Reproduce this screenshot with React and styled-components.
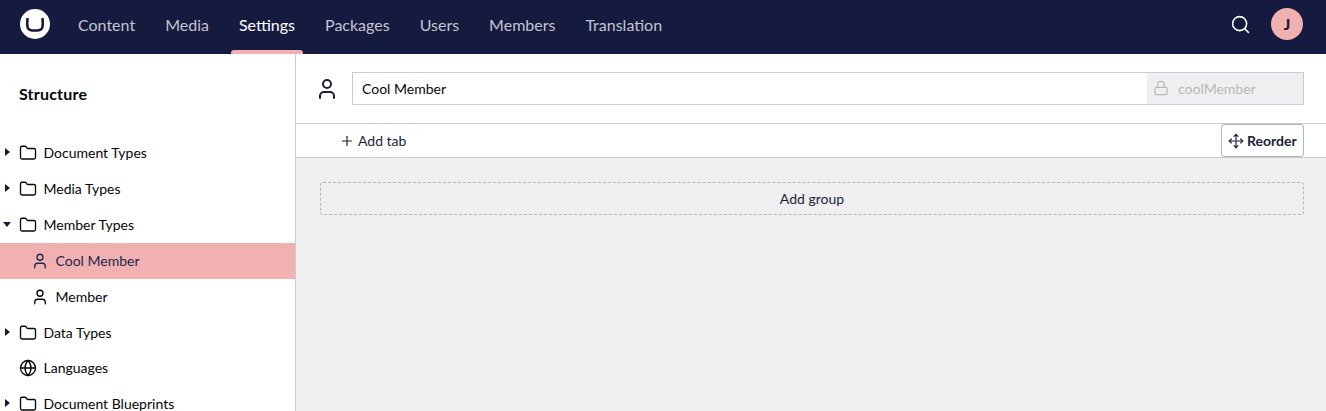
import React from 'react';
import styled, { createGlobalStyle, css } from 'styled-components';
import { Folder, Globe, Lock, Move, Plus, Search, User } from 'lucide-react';

const GlobalStyle = createGlobalStyle`
  *, *::before, *::after { box-sizing: border-box; }
  body {
    margin: 0;
    overflow: hidden;
    background: #fff;
    color: #060606;
    font: 14px/20px Lato, "Open Sans", sans-serif;
  }
  button { font: inherit; cursor: pointer; }
`;

const Shell = styled.div`
  display: flex;
  flex-direction: column;
  height: 100vh;
`;

const Header = styled.header`
  display: flex;
  flex: none;
  height: 54px;
  padding: 0 23px 0 20px;
  background: #151a3f;
  border-bottom: 1px solid #11173a;
`;

const Logo = styled.svg`
  width: 30px;
  height: 30px;
  margin: 9px 13px 0 0;
`;

const Nav = styled.nav`
  display: flex;
  flex: 1;
`;

const NavItem = styled.a`
  position: relative;
  padding: 14px 15px 0;
  font-size: 16px;
  line-height: 21px;
  color: ${(p) => (p.$active ? '#fff' : '#c4c5d0')};

  ${(p) =>
    p.$active &&
    css`
      &::after {
        content: '';
        position: absolute;
        left: 7px;
        right: 7px;
        bottom: -1px;
        height: 4px;
        border-radius: 3px 3px 0 0;
        background: #f2b1b1;
      }
    `}
`;

const Tools = styled.div`
  display: flex;
  align-items: center;
  height: 48px;
  gap: 20px;
  color: #fff;
`;

const Avatar = styled.div`
  width: 32px;
  height: 32px;
  border-radius: 50%;
  background: #f2b1b1;
  color: #151a3f;
  font-size: 15px;
  font-weight: 900;
  line-height: 32px;
  text-align: center;
`;

const Body = styled.div`
  display: flex;
  flex: 1;
  min-height: 0;
`;

const Sidebar = styled.aside`
  flex: none;
  width: 296px;
  border-right: 1px solid #cbcbce;
  overflow: hidden;
`;

const SidebarTitle = styled.h3`
  margin: 0;
  padding: 30px 19px 31px;
  font-size: 16px;
  font-weight: 700;
  line-height: 20px;
  letter-spacing: 0.2px;
`;

const TreeRow = styled.div`
  display: flex;
  align-items: center;
  height: ${(p) => (p.$short ? 35 : 36)}px;
  padding-bottom: ${(p) => (p.$short ? 1 : 0)}px;
  padding-left: ${(p) => (p.$child ? 31 : 0)}px;
  background: ${(p) => (p.$selected ? '#f2b1b1' : 'transparent')};
  color: ${(p) => (p.$selected ? '#1b264f' : '#060606')};

  > svg { flex: none; }
`;

const TreeLabel = styled.span`
  margin-left: 6.5px;
`;

const CaretSlot = styled.span`
  width: 19px;
  height: 16px;
  flex: none;
`;

const Caret = styled.i`
  display: block;
  width: 0;
  height: 0;
  border-style: solid;
  ${(p) =>
    p.$open
      ? css`
          margin: 5px 0 0 3px;
          border-width: 5px 4px 0;
          border-color: #151a3f transparent transparent;
        `
      : css`
          margin: 3px 0 0 5px;
          border-width: 4px 0 4px 5px;
          border-color: transparent transparent transparent #151a3f;
        `}
`;

const Editor = styled.main`
  display: flex;
  flex: 1;
  flex-direction: column;
  min-width: 0;
`;

const EditorHeader = styled.div`
  display: flex;
  align-items: center;
  height: 70px;
  padding: 0 22px 0 19px;
  border-bottom: 1px solid #cbcbce;
  color: #1b1f3a;

  > svg { margin-right: 13px; }
`;

const NameField = styled.div`
  display: flex;
  flex: 1;
  height: 33px;
  border: 1px solid #cbcbce;
  line-height: 32px;
  color: #060606;
`;

const NameValue = styled.span`
  flex: 1;
  padding-left: 9px;
`;

const Alias = styled.span`
  display: flex;
  align-items: center;
  gap: 9px;
  width: 156px;
  padding-left: 6px;
  background: #efeff1;
  color: #b8b8b8;

  svg { margin-bottom: 2px; }
`;

const TabBar = styled.div`
  display: flex;
  justify-content: space-between;
  height: 34px;
  padding: 0 22px 0 43px;
  border-bottom: 1px solid #cbcbce;
`;

const AddTab = styled.button`
  display: flex;
  align-items: center;
  gap: 3px;
  padding: 0;
  border: 0;
  background: none;
  color: #1b1f3a;
`;

const ReorderButton = styled.button`
  display: flex;
  align-items: center;
  gap: 3px;
  width: 83px;
  height: 33px;
  padding: 0 0 0 6px;
  border: 1px solid #b5b5b8;
  border-radius: 3px;
  background: #fff;
  color: #1b1f3a;
  font-weight: 700;
`;

const Canvas = styled.section`
  flex: 1;
  padding: 24px 22px 24px 24px;
  background: #efeff1;
`;

const AddGroup = styled.button`
  display: block;
  width: 100%;
  height: 33px;
  padding: 0;
  border: 1px dashed #b5b5b8;
  border-radius: 3px;
  background: none;
  color: #1b1f3a;
`;

const sections = ['Content', 'Media', 'Settings', 'Packages', 'Users', 'Members', 'Translation'];

const tree = [
  { label: 'Document Types', icon: Folder, caret: true },
  { label: 'Media Types', icon: Folder, caret: true },
  { label: 'Member Types', icon: Folder, caret: true, open: true },
  { label: 'Cool Member', icon: User, child: true, selected: true },
  { label: 'Member', icon: User, child: true },
  { label: 'Data Types', icon: Folder, caret: true },
  { label: 'Languages', icon: Globe, short: true },
  { label: 'Document Blueprints', icon: Folder, caret: true },
];

function TreeItem({ item }) {
  const Icon = item.icon;
  return (
    <TreeRow $child={item.child} $selected={item.selected} $short={item.short}>
      {!item.child && <CaretSlot>{item.caret && <Caret $open={item.open} />}</CaretSlot>}
      <Icon size={18} strokeWidth={1.75} />
      <TreeLabel>{item.label}</TreeLabel>
    </TreeRow>
  );
}

export default function App() {
  return (
    <Shell>
      <GlobalStyle />
      <Header>
        <Logo viewBox="0 0 30 30">
          <circle cx="15" cy="15" r="15" fill="#fff" />
          <path
            d="M7.6 9C7 13 7 16.300 7.700 18.600C8.400 21 10.500 21.600 15 21.600S21.600 21 22.300 18.600C23 16.300 23 13 22.400 9"
            fill="none"
            stroke="#151a3f"
            strokeWidth="2.5"
          />
        </Logo>
        <Nav>
          {sections.map((name) => (
            <NavItem key={name} $active={name === 'Settings'}>{name}</NavItem>
          ))}
        </Nav>
        <Tools>
          <Search size={21} strokeWidth={1.75} />
          <Avatar>J</Avatar>
        </Tools>
      </Header>
      <Body>
        <Sidebar>
          <SidebarTitle>Structure</SidebarTitle>
          {tree.map((item) => (
            <TreeItem key={item.label} item={item} />
          ))}
        </Sidebar>
        <Editor>
          <EditorHeader>
            <User size={24} strokeWidth={2} />
            <NameField>
              <NameValue>Cool Member</NameValue>
              <Alias>
                <Lock size={16} strokeWidth={1.75} />
                coolMember
              </Alias>
            </NameField>
          </EditorHeader>
          <TabBar>
            <AddTab>
              <Plus size={16} strokeWidth={1.75} />
              Add tab
            </AddTab>
            <ReorderButton>
              <Move size={16} strokeWidth={1.75} />
              Reorder
            </ReorderButton>
          </TabBar>
          <Canvas>
            <AddGroup>Add group</AddGroup>
          </Canvas>
        </Editor>
      </Body>
    </Shell>
  );
}
